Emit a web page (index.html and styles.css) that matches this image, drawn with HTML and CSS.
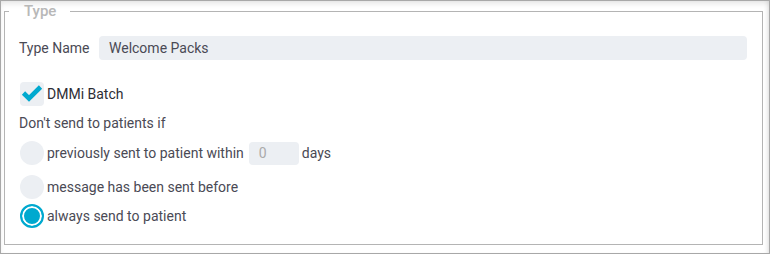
FILE: index.html
```html
<!DOCTYPE html>
<html lang="en">
<head>
    <meta charset="UTF-8">
    <title>Type</title>
    <link rel="stylesheet" href="styles.css">
</head>
<body>
<div class="frame">
    <fieldset class="group">
        <legend>Type</legend>
        <div class="row name-row">
            <label class="label">Type Name</label>
            <div class="field wide">Welcome Packs</div>
        </div>
        <div class="row check-row">
            <span class="box">
                <svg width="24" height="24" viewBox="0 0 24 24"><path d="M3.5 11 L9 16.5 L20.5 5" fill="none" stroke="#00a9cf" stroke-width="4.6"/></svg>
            </span>
            <span class="text dark">DMMi Batch</span>
        </div>
        <div class="note">Don't send to patients if</div>
        <div class="row radio-row first">
            <span class="radio"></span>
            <span class="text">previously sent to patient within</span>
            <div class="field small">0</div>
            <span class="text days">days</span>
        </div>
        <div class="row radio-row second">
            <span class="radio"></span>
            <span class="text">message has been sent before</span>
        </div>
        <div class="row radio-row third">
            <span class="radio on"></span>
            <span class="text">always send to patient</span>
        </div>
    </fieldset>
</div>
</body>
</html>
```
FILE: styles.css
```css
* {
    padding: 0;
    margin: 0;
    box-sizing: border-box;
}

body {
    font-family: Roboto, "Liberation Sans", sans-serif;
    font-size: 14px;
    color: #4a4a55;
    background: #fff;
}

.frame {
    width: 770px;
    height: 254px;
    border: 1px solid #a8a8a8;
    padding: 2px 6px 8px 3px;
    box-shadow: inset 0 4px 6px -2px rgba(0, 0, 0, 0.12), inset -4px 0 5px -3px rgba(0, 0, 0, 0.1);
}

.group {
    height: 100%;
    border: 1px solid #b4b4b4;
    padding: 0 15px 0 14px;
}

.group legend {
    margin-left: -10px;
    padding: 0 14px 0 15px;
    font-size: 15px;
    font-weight: 500;
    line-height: 16px;
    color: #b8b8b8;
}

.row {
    display: flex;
    align-items: center;
}

.name-row {
    margin-top: 17px;
}

.label {
    width: 80px;
}

.field {
    height: 24px;
    line-height: 24px;
    background: #eceff3;
    border-radius: 4px;
    padding-left: 10px;
}

.wide {
    flex: 1;
}

.small {
    width: 50px;
    margin-left: 5px;
    padding-left: 10px;
    color: #aaa;
    height: 23px;
    line-height: 23px;
}

.days {
    margin-left: 6px;
}

.check-row {
    margin-top: 22px;
    padding-left: 1px;
}

.box {
    width: 24px;
    height: 24px;
    border-radius: 4px;
    background: #eceff3;
    display: flex;
}

.text {
    margin-left: 3px;
}

.dark {
    color: #2d2d35;
}

.note {
    margin-top: 7px;
    line-height: 20px;
}

.radio {
    width: 24px;
    height: 24px;
    border-radius: 50%;
    background: #eceff3;
    margin-left: 1px;
}

.radio.on {
    background: #00a9cf;
    border: 2px solid #00a9cf;
    box-shadow: inset 0 0 0 2px #fff;
}

.first {
    margin-top: 8px;
}

.second {
    margin-top: 10px;
}

.third {
    margin-top: 5px;
}
```
